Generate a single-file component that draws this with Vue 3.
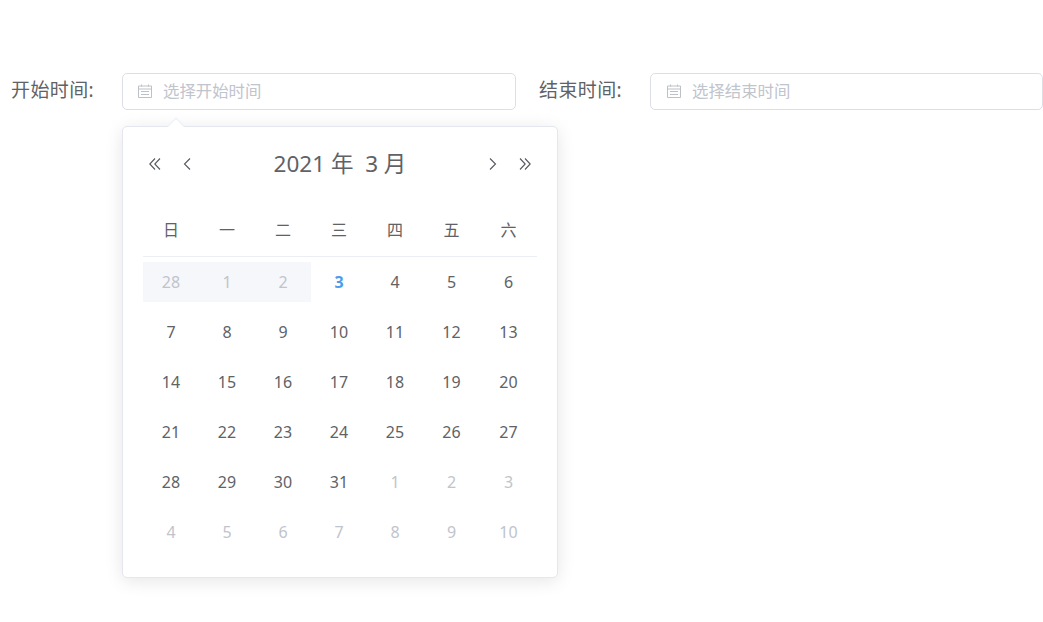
<script setup>
const weekdays = ['日', '一', '二', '三', '四', '五', '六']
const prev = [28, 1, 2]
const cells = []
prev.forEach((d) => cells.push({ d, cls: 'prev' }))
for (let d = 3; d <= 31; d++) cells.push({ d, cls: d === 3 ? 'today' : '' })
for (let d = 1; d <= 10; d++) cells.push({ d, cls: 'next' })
</script>

<template>
  <div class="page">
    <div class="form">
      <div class="field first">
        <label class="label">开始时间:</label>
        <div class="picker">
          <div class="input">
            <svg class="cal" viewBox="0 0 14 14" width="14" height="14">
              <path d="M.5 2h13v11.5H.5zM.5 5h13M3.5 .5v2M10.5 .5v2M3 7.5h8M3 10.5h8" fill="none" stroke="currentColor" />
            </svg>
            <span class="ph">选择开始时间</span>
          </div>
          <div class="panel">
            <div class="arrow"></div>
            <div class="head">
              <div class="nav">
                <svg viewBox="0 0 12 12" width="12" height="12"><path d="M6 .5.8 6 6 11.5M11 .5 5.8 6l5.2 5.5" /></svg>
                <svg viewBox="0 0 12 12" width="12" height="12"><path d="M9 .5 3.5 6 9 11.5" /></svg>
              </div>
              <div class="title">2021 年&nbsp;&nbsp;3 月</div>
              <div class="nav">
                <svg viewBox="0 0 12 12" width="12" height="12"><path d="M3 .5 8.5 6 3 11.5" /></svg>
                <svg viewBox="0 0 12 12" width="12" height="12"><path d="M1 .5 6.2 6 1 11.5M6 .5 11.2 6 6 11.5" /></svg>
              </div>
            </div>
            <div class="weeks">
              <span v-for="w in weekdays" :key="w">{{ w }}</span>
            </div>
            <div class="days">
              <div v-for="(c, i) in cells" :key="i" class="day" :class="c.cls"><span>{{ c.d }}</span></div>
            </div>
          </div>
        </div>
      </div>
      <div class="field second">
        <label class="label">结束时间:</label>
        <div class="picker">
          <div class="input">
            <svg class="cal" viewBox="0 0 14 14" width="14" height="14">
              <path d="M.5 2h13v11.5H.5zM.5 5h13M3.5 .5v2M10.5 .5v2M3 7.5h8M3 10.5h8" fill="none" stroke="currentColor" />
            </svg>
            <span class="ph">选择结束时间</span>
          </div>
        </div>
      </div>
    </div>
  </div>
</template>

<style>
html, body { background: #fff; overflow: hidden; }
</style>

<style scoped>
.page {
  width: 1043px;
  height: 622px;
  padding-top: 73px;
  box-sizing: border-box;
  font-family: "Noto Sans", "Noto Sans CJK SC", sans-serif;
  color: #606266;
}
.form { display: flex; }
.field { display: flex; align-items: center; height: 37px; }
.first { margin-right: 23px; }
.label {
  width: 122px;
  padding-left: 11px;
  box-sizing: border-box;
  font-size: 19px;
  letter-spacing: 0.4px;
  line-height: 34px;
  align-self: flex-start;
  white-space: nowrap;
}
.second .label { width: 111px; padding-left: 0; }
.picker { position: relative; }
.input {
  width: 394px;
  height: 37px;
  box-sizing: border-box;
  border: 1px solid #dcdfe6;
  border-radius: 5px;
  display: flex;
  align-items: center;
  padding-left: 15px;
  padding-bottom: 1px;
  background: #fff;
}
.second .input { width: 393px; padding-left: 16px; }
.cal { color: #bcc0c8; margin-right: 11px; flex: none; }
.ph { font-size: 16.4px; color: #c0c4cc; line-height: 34px; margin-top: -1px; }
.panel {
  position: absolute;
  left: 0;
  top: 53px;
  width: 436px;
  height: 452px;
  box-sizing: border-box;
  border: 1px solid #e4e7ed;
  border-radius: 5px;
  background: #fff;
  box-shadow: 0 3px 18px 0 rgba(0, 0, 0, 0.1);
  padding: 0 20px;
}
.arrow {
  position: absolute;
  left: 47px;
  top: -7px;
  width: 11px;
  height: 11px;
  background: #fff;
  border-left: 1px solid #ebeef5;
  border-top: 1px solid #ebeef5;
  transform: rotate(45deg);
}
.head {
  display: flex;
  align-items: center;
  justify-content: space-between;
  height: 38px;
  margin: 18px 0 0;
  padding: 0 6px;
}
.nav { display: flex; gap: 20px; }
.nav svg { fill: none; stroke: #55585e; stroke-width: 1.1; display: block; }
.title { font-size: 22.5px; line-height: 38px; white-space: nowrap; }
.weeks {
  display: grid;
  grid-template-columns: 56px 56px 56px 56px 56px 57px 57px;
  margin-top: 29px;
  height: 44px;
  border-bottom: 1px solid #ebeef5;
  font-size: 16px;
  line-height: 36px;
  text-align: center;
}
.days { display: grid; grid-template-columns: 56px 56px 56px 56px 56px 57px 57px; }
.day {
  height: 50px;
  display: flex;
  align-items: center;
  justify-content: center;
  font-size: 16px;
}
.prev {
  color: #c0c4cc;
  background: #f5f7fa;
  background-clip: content-box;
  padding: 5px 0;
  box-sizing: border-box;
}
.next { color: #c0c4cc; }
.today { color: #4a9cf0; font-weight: 700; }
</style>
